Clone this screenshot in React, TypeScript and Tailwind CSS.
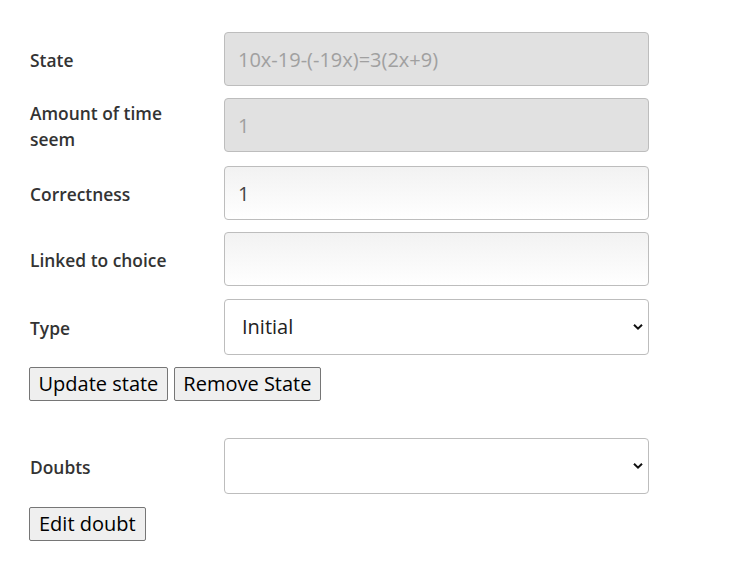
import React from "react";

const font = { fontFamily: '"Open Sans", sans-serif' };

function Chevron() {
  return (
    <svg className="pointer-events-none absolute right-[6px] top-1/2 -translate-y-1/2" width="10" height="7" viewBox="0 0 10 7">
      <path d="M1 1.2 L5 5.2 L9 1.2" fill="none" stroke="#111" strokeWidth="2" />
    </svg>
  );
}

function Row({ label, children, className = "" }: { label: React.ReactNode; children: React.ReactNode; className?: string }) {
  return (
    <div className={"flex items-center " + className}>
      <div className="w-[194px] shrink-0 pr-[30px] pt-[2px] text-[17.4px] leading-[26px] font-semibold text-[#333]">{label}</div>
      {children}
    </div>
  );
}

const inputBase =
  "h-[54px] w-[425px] rounded-[4px] border border-[#bdbdbd] px-[13px] text-[20px] outline-none";

const btn =
  "h-[34px] rounded-[2px] border border-[#767676] bg-[#efefef] text-[20px] leading-none text-black";

export default function App() {
  return (
    <div className="min-h-[568px] bg-white pl-[30px] pt-[32px]" style={font}>
      <Row label="State">
        <input
          disabled
          value="10x-19-(-19x)=3(2x+9)"
          readOnly
          className={inputBase + " bg-[#e1e1e1] text-[#a0a0a0]"}
        />
      </Row>
      <Row label="Amount of time seem" className="mt-[12px]">
        <input disabled value="1" readOnly className={inputBase + " bg-[#e1e1e1] text-[#a0a0a0]"} />
      </Row>
      <Row label="Correctness" className="mt-[14px]">
        <input
          value="1"
          readOnly
          className={inputBase + " bg-gradient-to-b from-[#f2f2f2] to-white text-[#444]"}
        />
      </Row>
      <Row label="Linked to choice" className="mt-[12px]">
        <input value="" readOnly className={inputBase + " bg-gradient-to-b from-[#f2f2f2] to-white text-[#444]"} />
      </Row>
      <Row label="Type" className="mt-[13px]">
        <div className="relative">
          <select className={inputBase + " h-[56px] appearance-none bg-white pl-[17px] text-[#222]"} defaultValue="Initial">
            <option>Initial</option>
          </select>
          <Chevron />
        </div>
      </Row>
      <div className="-ml-px mt-[12px] flex gap-[6px]">
        <button className={btn + " px-[8.5px]"}>Update state</button>
        <button className={btn + " px-[8.5px]"}>Remove State</button>
      </div>
      <Row label="Doubts" className="mt-[37px]">
        <div className="relative">
          <select className={inputBase + " h-[56px] appearance-none bg-white text-[#222]"} defaultValue="">
            <option value=""></option>
          </select>
          <Chevron />
        </div>
      </Row>
      <div className="-ml-px mt-[13px] flex">
        <button className={btn + " h-[33px] px-[9px]"}>Edit doubt</button>
      </div>
    </div>
  );
}
